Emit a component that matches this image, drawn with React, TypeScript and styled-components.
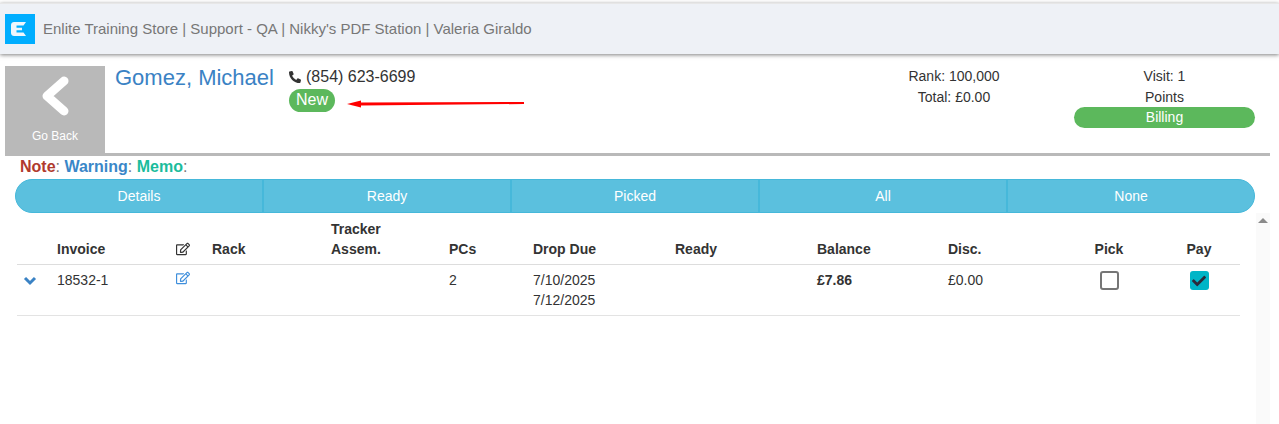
import React from "react";
import styled, { createGlobalStyle } from "styled-components";
import { FaCheck, FaPhoneAlt, FaRegEdit } from "react-icons/fa";

const GlobalStyle = createGlobalStyle`
  html, body {
    margin: 0;
    height: 424px;
    overflow: hidden;
    background: #fff;
  }
  body {
    font-family: "Liberation Sans", Arial, sans-serif;
    font-size: 14px;
    line-height: 20px;
    color: #333;
  }
`;

const Page = styled.div`
  position: relative;
  height: 424px;
  padding-top: 3px;
  box-sizing: border-box;
`;

const TopBar = styled.nav`
  height: 50px;
  display: flex;
  align-items: center;
  gap: 8px;
  padding-left: 5px;
  background: #eef1f6;
  border-top: 1px solid #e7e7e7;
  box-shadow: 0 1px 4px rgba(0, 0, 0, 0.5);
`;

const Logo = styled.svg`
  width: 30px;
  height: 30px;
  display: block;
`;

const StoreList = styled.span`
  color: #777;
  font-size: 15px;
`;

const CustomerHeader = styled.header`
  display: flex;
  width: 1265px;
  height: 87px;
  margin: 12px 0 0 5px;
  border-bottom: 3px solid #b9b9b9;
  > * {
    flex-shrink: 0;
  }
`;

const BackButton = styled.a`
  width: 100px;
  display: flex;
  flex-direction: column;
  align-items: center;
  background: #b9b9b9;
  color: #fff;
  font-size: 12px;
  padding-top: 10px;
  box-sizing: border-box;
`;

const BackLabel = styled.span`
  margin-top: 10px;
`;

const CustomerName = styled.h3`
  width: 174px;
  margin: 0 0 0 10px;
  font-size: 22px;
  font-weight: 400;
  line-height: 24px;
  color: #3a82c4;
`;

const ContactColumn = styled.div`
  width: 569px;
  display: flex;
  flex-direction: column;
  align-items: flex-start;
  padding-top: 1px;
  font-size: 16px;
`;

const Phone = styled.div`
  display: flex;
  align-items: center;
  gap: 5px;
  color: #333;
  svg {
    width: 12px;
    height: 12px;
  }
`;

const NewBadge = styled.span`
  margin-top: 2px;
  padding: 1px 7px;
  height: 23px;
  box-sizing: border-box;
  border-radius: 12px;
  background: #5cb85c;
  color: #fff;
  font-size: 16px;
`;

const StatColumn = styled.div<{ $width: number; $offset?: number }>`
  width: ${(props) => props.$width}px;
  margin-left: ${(props) => props.$offset ?? 0}px;
  display: flex;
  flex-direction: column;
  align-items: center;
  line-height: 21px;
`;

const BillingPill = styled.div`
  width: 181px;
  height: 21px;
  margin-top: -1px;
  border-radius: 11px;
  background: #5cb85c;
  color: #fff;
  text-align: center;
`;

const Notes = styled.div`
  margin: 1px 0 0 20px;
  height: 22px;
  font-size: 16px;
  line-height: 20px;
  color: #777;
`;

const NoteLabel = styled.b<{ $color: string }>`
  color: ${(props) => props.$color};
`;

const Tabs = styled.div`
  display: flex;
  width: 1240px;
  height: 34px;
  margin-left: 15px;
  box-sizing: border-box;
  border: 1px solid #46b8da;
  border-radius: 17px;
  background: #5bc0de;
  overflow: hidden;
`;

const Tab = styled.button`
  flex: 1;
  border: 0;
  border-right: 2px solid #46b8da;
  background: none;
  padding: 0;
  color: #fff;
  font: inherit;
  &:last-child {
    border-right: 0;
  }
`;

const Table = styled.table`
  width: 1223px;
  margin: 1px 0 0 17px;
  table-layout: fixed;
  border-collapse: collapse;
`;

const HeadCell = styled.th<{ $center?: boolean }>`
  padding: 5px 6px 5px;
  text-align: ${(props) => (props.$center ? "center" : "left")};
  vertical-align: bottom;
  font-weight: 700;
  border-bottom: 1px solid #ddd;
  svg {
    display: block;
    width: 14px;
    height: 14px;
    margin-bottom: 3px;
  }
`;

const Cell = styled.td<{ $center?: boolean; $bold?: boolean }>`
  padding: 5px 6px;
  height: 40px;
  text-align: ${(props) => (props.$center ? "center" : "left")};
  vertical-align: top;
  font-weight: ${(props) => (props.$bold ? 700 : 400)};
  border-bottom: 1px solid #e3e3e3;
`;

const Expander = styled.svg`
  display: block;
  width: 14px;
  height: 10px;
  margin-top: 6px;
`;

const EditIcon = styled(FaRegEdit)`
  display: block;
  width: 14px;
  height: 14px;
  margin-top: 1px;
  color: #3f8fdc;
`;

const CheckBox = styled.span<{ $checked?: boolean }>`
  display: inline-flex;
  align-items: center;
  justify-content: center;
  width: 19px;
  height: 19px;
  margin-top: 1px;
  box-sizing: border-box;
  border-radius: 3px;
  border: ${(props) => (props.$checked ? "0" : "2px solid #767676")};
  background: ${(props) => (props.$checked ? "#00b5c7" : "#fff")};
  color: #2b2b3a;
  svg {
    width: 14px;
    height: 14px;
  }
`;

const ScrollTrack = styled.div`
  position: absolute;
  top: 213px;
  left: 1256px;
  bottom: 0;
  width: 14px;
  background: #fafafa;
`;

const ScrollArrow = styled.div`
  margin: 5px auto 0;
  width: 0;
  height: 0;
  border-left: 5px solid transparent;
  border-right: 5px solid transparent;
  border-bottom: 5px solid #8a8a8a;
`;

const Annotation = styled.svg`
  position: absolute;
  top: 96px;
  left: 345px;
  width: 182px;
  height: 16px;
`;

const columnWidths = [34, 119, 36, 119, 118, 84, 142, 142, 131, 118, 98, 82];
const tabs = ["Details", "Ready", "Picked", "All", "None"];

export default function App() {
  return (
    <Page>
      <GlobalStyle />
      <TopBar>
        <Logo viewBox="0 0 30 30">
          <rect width="30" height="30" fill="#00aeff" />
          <path
            d="M9 8h12l-2.5 3.5H11.5v2.2h5.5v2.6h-5.5v2.2H18.5L21 22H9c-1.5 0-3-1-3-3v-8c0-2 1.5-3 3-3z"
            fill="#eef6fc"
          />
        </Logo>
        <StoreList>
          Enlite Training Store | Support - QA | Nikky's PDF Station | Valeria Giraldo
        </StoreList>
      </TopBar>

      <CustomerHeader>
        <BackButton>
          <svg width="40" height="40" viewBox="0 0 40 40">
            <path
              d="M29 5 L12 20 L29 35"
              fill="none"
              stroke="#fff"
              strokeWidth="9"
              strokeLinejoin="round"
              strokeLinecap="round"
            />
          </svg>
          <BackLabel>Go Back</BackLabel>
        </BackButton>
        <CustomerName>Gomez, Michael</CustomerName>
        <ContactColumn>
          <Phone>
            <FaPhoneAlt />
            (854) 623-6699
          </Phone>
          <NewBadge>New</NewBadge>
        </ContactColumn>
        <StatColumn $width={192}>
          <span>Rank: 100,000</span>
          <span>Total: £0.00</span>
        </StatColumn>
        <StatColumn $width={181} $offset={24}>
          <span>Visit: 1</span>
          <span>Points</span>
          <BillingPill>Billing</BillingPill>
        </StatColumn>
      </CustomerHeader>

      <Notes>
        <NoteLabel $color="#b03a2e">Note</NoteLabel>: <NoteLabel $color="#3a87c8">Warning</NoteLabel>:{" "}
        <NoteLabel $color="#1abc9c">Memo</NoteLabel>:
      </Notes>

      <Tabs>
        {tabs.map((tab) => (
          <Tab key={tab}>{tab}</Tab>
        ))}
      </Tabs>

      <Table>
        <colgroup>
          {columnWidths.map((width, i) => (
            <col key={i} width={width} />
          ))}
        </colgroup>
        <thead>
          <tr>
            <HeadCell />
            <HeadCell>Invoice</HeadCell>
            <HeadCell>
              <FaRegEdit />
            </HeadCell>
            <HeadCell>Rack</HeadCell>
            <HeadCell>
              Tracker
              <br />
              Assem.
            </HeadCell>
            <HeadCell>PCs</HeadCell>
            <HeadCell>Drop Due</HeadCell>
            <HeadCell>Ready</HeadCell>
            <HeadCell>Balance</HeadCell>
            <HeadCell>Disc.</HeadCell>
            <HeadCell $center>Pick</HeadCell>
            <HeadCell $center>Pay</HeadCell>
          </tr>
        </thead>
        <tbody>
          <tr>
            <Cell>
              <Expander viewBox="0 0 14 10">
                <path d="M2 2 L7 7 L12 2" fill="none" stroke="#3a82c4" strokeWidth="3" />
              </Expander>
            </Cell>
            <Cell>18532-1</Cell>
            <Cell>
              <EditIcon />
            </Cell>
            <Cell />
            <Cell />
            <Cell>2</Cell>
            <Cell>
              7/10/2025
              <br />
              7/12/2025
            </Cell>
            <Cell />
            <Cell $bold>£7.86</Cell>
            <Cell>£0.00</Cell>
            <Cell $center>
              <CheckBox />
            </Cell>
            <Cell $center>
              <CheckBox $checked>
                <FaCheck />
              </CheckBox>
            </Cell>
          </tr>
        </tbody>
      </Table>

      <ScrollTrack>
        <ScrollArrow />
      </ScrollTrack>

      <Annotation viewBox="0 0 182 16">
        <path d="M2 8 L16 4.5 L16 6.6 L179 6 L179 8 L16 9.4 L16 11.5 Z" fill="#f00" />
      </Annotation>
    </Page>
  );
}
